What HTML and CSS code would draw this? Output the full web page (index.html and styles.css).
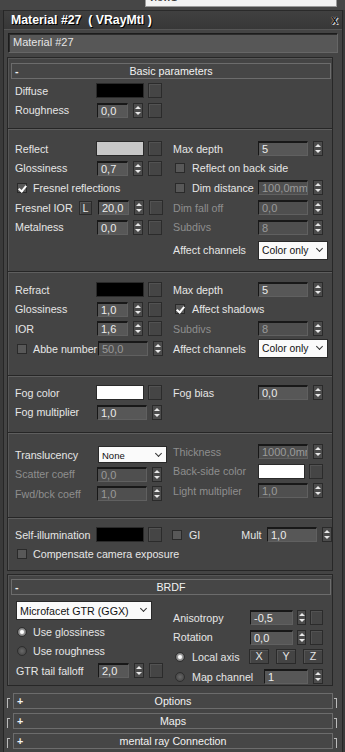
FILE: index.html
```html
<!DOCTYPE html>
<html lang="en">
<head>
    <meta charset="UTF-8">
    <title>Material #27 ( VRayMtl )</title>
    <link rel="stylesheet" href="styles.css">
</head>
<body>

    <div class="top"><div class="view"><span>view1</span></div></div>

    <div class="win">
        <div class="title"><span>Material #27&nbsp; ( VRayMtl )</span><span class="close">x</span></div>
        <div class="name">Material #27</div>

        <!-- Basic parameters -->
        <div class="panel p1">
            <div class="rh"><span class="sign">-</span><span>Basic parameters</span><span></span></div>

            <div class="sec s1">
                <div class="col">
                    <div class="row"><span class="lbl">Diffuse</span><span class="sw black"></span><span class="mb"></span></div>
                    <div class="row"><span class="lbl">Roughness</span><span class="fld">0,0</span><span class="arr"></span><span class="mb m5"></span></div>
                </div>
            </div>
            <div class="sep"></div>

            <div class="sec s2">
                <div class="col">
                    <div class="row"><span class="lbl">Reflect</span><span class="sw grey"></span><span class="mb"></span></div>
                    <div class="row"><span class="lbl">Glossiness</span><span class="fld">0,7</span><span class="arr"></span><span class="mb m5"></span></div>
                    <div class="row"><span class="chk on"></span><span class="ctext">Fresnel reflections</span></div>
                    <div class="row"><span class="lbl short">Fresnel IOR</span><span class="lbtn">L</span><span class="fld">20,0</span><span class="arr"></span><span class="mb m5"></span></div>
                    <div class="row"><span class="lbl">Metalness</span><span class="fld">0,0</span><span class="arr"></span><span class="mb m5"></span></div>
                </div>
                <div class="col">
                    <div class="row"><span class="rl">Max depth</span><span class="fld r">5</span><span class="arr"></span></div>
                    <div class="row"><span class="chk r"></span><span class="ctext r">Reflect on back side</span></div>
                    <div class="row"><span class="rl"><span class="chk r"></span><span class="ctext r">Dim distance</span></span><span class="fld r dis">100,0mm</span><span class="arr"></span></div>
                    <div class="row"><span class="rl dis">Dim fall off</span><span class="fld r dis">0,0</span><span class="arr"></span></div>
                    <div class="row"><span class="rl dis">Subdivs</span><span class="fld r dis">8</span><span class="arr"></span></div>
                    <div class="row tall"><span class="rl">Affect channels</span><span class="dd ch">Color only</span></div>
                </div>
            </div>
            <div class="sep"></div>

            <div class="sec s3">
                <div class="col">
                    <div class="row"><span class="lbl">Refract</span><span class="sw black"></span><span class="mb"></span></div>
                    <div class="row"><span class="lbl">Glossiness</span><span class="fld">1,0</span><span class="arr"></span><span class="mb m5"></span></div>
                    <div class="row"><span class="lbl">IOR</span><span class="fld">1,6</span><span class="arr"></span><span class="mb m5"></span></div>
                    <div class="row"><span class="chk"></span><span class="ctext abbe">Abbe number</span><span class="fld w dis">50,0</span><span class="arr"></span></div>
                </div>
                <div class="col">
                    <div class="row"><span class="rl">Max depth</span><span class="fld r">5</span><span class="arr"></span></div>
                    <div class="row"><span class="chk r on"></span><span class="ctext r">Affect shadows</span></div>
                    <div class="row"><span class="rl dis">Subdivs</span><span class="fld r dis">8</span><span class="arr"></span></div>
                    <div class="row"><span class="rl">Affect channels</span><span class="dd ch">Color only</span></div>
                </div>
            </div>
            <div class="sep"></div>

            <div class="sec s4">
                <div class="col">
                    <div class="row"><span class="lbl">Fog color</span><span class="sw white"></span><span class="mb"></span></div>
                    <div class="row"><span class="lbl">Fog multiplier</span><span class="fld w">1,0</span><span class="arr"></span></div>
                </div>
                <div class="col">
                    <div class="row"><span class="rl">Fog bias</span><span class="fld r">0,0</span><span class="arr"></span></div>
                </div>
            </div>
            <div class="sep"></div>

            <div class="sec s5">
                <div class="col left">
                    <div class="row"><span class="lbl">Translucency</span><span class="dd none">None</span></div>
                    <div class="row"><span class="lbl dis">Scatter coeff</span><span class="fld w dis">0,0</span><span class="arr"></span></div>
                    <div class="row"><span class="lbl dis">Fwd/bck coeff</span><span class="fld w dis">1,0</span><span class="arr"></span></div>
                </div>
                <div class="col">
                    <div class="row"><span class="rl dis">Thickness</span><span class="fld r dis">1000,0mm</span><span class="arr"></span></div>
                    <div class="row"><span class="rl dis">Back-side color</span><span class="sw white bs"></span><span class="mb"></span></div>
                    <div class="row"><span class="rl dis">Light multiplier</span><span class="fld r dis">1,0</span><span class="arr"></span></div>
                </div>
            </div>
            <div class="sep"></div>

            <div class="sec s6">
                <div class="row"><span class="lbl">Self-illumination</span><span class="sw black"></span><span class="mb"></span><span class="chk gi"></span><span class="ctext r">GI</span><span class="mult">Mult</span><span class="fld r">1,0</span><span class="arr"></span></div>
                <div class="row"><span class="chk"></span><span class="ctext">Compensate camera exposure</span></div>
            </div>
        </div>

        <!-- BRDF -->
        <div class="panel p2">
            <div class="rh"><span class="sign">-</span><span>BRDF</span><span></span></div>
            <div class="sec brdf">
                <div class="col">
                    <div class="row ddrow"><span class="dd ggx">Microfacet GTR (GGX)</span></div>
                    <div class="row"><span class="rad on"></span><span class="ctext">Use glossiness</span></div>
                    <div class="row"><span class="rad"></span><span class="ctext">Use roughness</span></div>
                    <div class="row"><span class="lbl">GTR tail falloff</span><span class="fld">2,0</span><span class="arr"></span><span class="mb m5"></span></div>
                </div>
                <div class="col right">
                    <div class="row"><span class="rl n">Anisotropy</span><span class="fld n">-0,5</span><span class="arr s"></span><span class="mb s"></span></div>
                    <div class="row"><span class="rl n">Rotation</span><span class="fld n">0,0</span><span class="arr s"></span><span class="mb s"></span></div>
                    <div class="row"><span class="rl la"><span class="rad r on"></span><span class="ctext r">Local axis</span></span><span class="xyz">X</span><span class="xyz">Y</span><span class="xyz">Z</span></div>
                    <div class="row"><span class="rl mc"><span class="rad r"></span><span class="ctext r">Map channel</span></span><span class="fld m">1</span><span class="arr"></span></div>
                </div>
            </div>
        </div>

        <div class="roll first"><span class="brk"></span><div class="rh"><span class="sign">+</span><span>Options</span><span></span></div><span class="brk rt"></span></div>
        <div class="roll"><span class="brk"></span><div class="rh"><span class="sign">+</span><span>Maps</span><span></span></div><span class="brk rt"></span></div>
        <div class="roll"><span class="brk"></span><div class="rh"><span class="sign">+</span><span>mental ray Connection</span><span></span></div><span class="brk rt"></span></div>
    </div>

</body>
</html>
```

FILE: styles.css
```css
* {
    box-sizing: border-box;
}

body {
    margin: 0;
    width: 345px;
    height: 752px;
    overflow: hidden;
    background-color: #3a3a3a;
    font-family: "Liberation Sans", Arial, sans-serif;
    font-size: 10.7px;
    color: #e6e6e6;
}

.top {
    height: 10px;
    padding-left: 145px;
    background-color: #464646;
}

.view {
    width: 192px;
    height: 7px;
    overflow: hidden;
    background-color: #f2f2f2;
    border: 1px solid #9a9a9a;
    border-top: 0;
    color: #333;
    font-size: 11px;
    padding-left: 3px;
}

.view span {
    display: block;
    margin-top: -9px;
}

.win {
    margin-left: 3px;
    width: 340px;
    height: 742px;
    background-color: #444;
    border-left: 1px solid #262626;
    border-right: 1px solid #262626;
}

.title {
    height: 20px;
    display: flex;
    align-items: center;
    justify-content: space-between;
    padding: 0 4px 0 7px;
    background: linear-gradient(#404040, #373737);
    border-top: 1px solid #2a2a2a;
    border-bottom: 1px solid #555;
    font-weight: bold;
    font-size: 12.3px;
    color: #fff;
    text-shadow: 1px 1px 0 #000;
}

.close {
    color: #1a1a1a;
    font-size: 12px;
    text-shadow: 0 0 1px #fff, 1px 1px 0 #ccc;
}

.name {
    margin: 3px 0 0 4px;
    width: 330px;
    height: 20px;
    padding: 2px 0 0 4px;
    background-color: #575757;
    border: 1px solid #1c1c1c;
    border-bottom-color: #666;
    border-right-color: #666;
    box-shadow: inset 1px 1px 0 #2c2c2c;
    font-size: 11px;
}

/* rollouts */

.panel {
    margin: 4px 0 0 3px;
    width: 326px;
    border: 1px solid #272727;
    box-shadow: inset 1px 1px 0 #565656;
}

.p1 {
    height: 514px;
}

.p2 {
    margin-top: 3px;
    height: 112px;
}

.rh {
    display: grid;
    grid-template-columns: 20px 1fr 20px;
    align-items: center;
    margin: 5px 0 0 3px;
    width: 320px;
    height: 16px;
    border: 1px solid #6c6c6c;
    background-color: #464646;
    color: #f2f2f2;
    text-align: center;
}

.p2 .rh {
    margin-top: 4px;
}

.rh .sign {
    text-align: left;
    padding-left: 3px;
    font-weight: bold;
}

.sec {
    display: grid;
    grid-template-columns: 147px 150px;
    column-gap: 11px;
    padding-left: 7px;
    align-items: start;
}

.sep {
    height: 2px;
    border-top: 1px solid #262626;
    border-bottom: 1px solid #5e5e5e;
}

.s1 { height: 49px; padding-top: 2px; }
.s2 { height: 141px; padding-top: 9px; }
.s3 { height: 102px; padding-top: 7px; }
.s4 { height: 55px; padding-top: 6px; }
.s5 { height: 83px; padding-top: 8px; }
.s5 .left { padding-top: 3px; }
.s6 { height: 50px; padding-top: 6px; display: block; }
.brdf { padding-top: 5px; padding-left: 8px; }
.brdf .right { padding-top: 8px; margin-left: -1px; }

.row {
    display: flex;
    align-items: center;
    height: 19.6px;
    white-space: nowrap;
}

.row.tall {
    height: 19px;
    margin-top: 4px;
}

.row.ddrow {
    height: 20px;
    margin-bottom: 2px;
}

.lbl {
    width: 81px;
    flex: none;
}

.lbl.short {
    width: 64px;
}

.rl {
    width: 85px;
    flex: none;
    display: flex;
    align-items: center;
}

.rl.n { width: 77px; }
.rl.la { width: 76px; }
.rl.mc { width: 91px; }

.dis {
    color: #8e8e8e;
}

/* controls */

.sw {
    width: 48px;
    height: 15px;
    border: 1px solid #2a2a2a;
    flex: none;
}

.sw.black { background-color: #000; }
.sw.grey { background-color: #c8c8c8; }
.sw.white { background-color: #fff; }
.sw.bs { width: 47px; }

.mb {
    width: 14px;
    height: 15px;
    margin-left: 4px;
    flex: none;
    background-color: #454545;
    border: 1px solid #2b2b2b;
    box-shadow: inset 1px 1px 0 #525252;
}

.mb.m5 { margin-left: 5px; }
.mb.s { width: 13px; margin-left: 4px; }

.fld {
    width: 31px;
    height: 15px;
    margin-left: 1px;
    padding: 1px 0 0 3px;
    flex: none;
    overflow: hidden;
    background-color: #575757;
    border-top: 2px solid #181818;
    border-left: 1px solid #181818;
    border-right: 1px solid #606060;
    border-bottom: 1px solid #606060;
    color: #ececec;
    font-size: 11px;
    line-height: 11px;
}

.fld.w { width: 50px; }
.fld.r { width: 50px; margin-left: 0; }
.fld.n { width: 43px; margin-left: 0; }
.fld.m { width: 44px; margin-left: 0; }

.fld.dis {
    background-color: #4f4f4f;
    color: #9a9a9a;
}

.arr {
    position: relative;
    width: 10px;
    height: 15px;
    margin-left: 5px;
    flex: none;
    background-color: #4c4c4c;
    border: 1px solid #2a2a2a;
}

.arr.s {
    width: 9px;
    margin-left: 4px;
}

.arr::before,
.arr::after {
    content: "";
    position: absolute;
    left: 50%;
    margin-left: -3px;
    border-left: 3px solid transparent;
    border-right: 3px solid transparent;
}

.arr::before {
    top: 2px;
    border-bottom: 3px solid #e8e8e8;
}

.arr::after {
    bottom: 2px;
    border-top: 3px solid #e8e8e8;
}

.lbtn {
    width: 13px;
    height: 14px;
    margin-right: 5px;
    flex: none;
    border: 1px solid #2a2a2a;
    box-shadow: inset 1px 1px 0 #555;
    text-align: center;
    line-height: 12px;
}

.chk {
    position: relative;
    width: 10px;
    height: 10px;
    margin-left: 2px;
    flex: none;
    background-color: #585858;
    border: 1px solid #2a2a2a;
}

.chk.gi {
    margin-left: 10px;
}

.chk.on::after {
    content: "";
    position: absolute;
    left: 2px;
    top: 0;
    width: 3px;
    height: 6px;
    border-right: 2px solid #fff;
    border-bottom: 2px solid #fff;
    transform: rotate(40deg);
}

.ctext {
    margin-left: 6px;
}

.ctext.r {
    margin-left: 7px;
}

.ctext.abbe {
    margin-left: 6px;
    width: 64px;
}

.rad {
    width: 10px;
    height: 10px;
    margin-left: 1px;
    flex: none;
    border-radius: 50%;
    background: radial-gradient(circle, #6a6a6a 0, #4a4a4a 70%);
    border: 1px solid #2e2e2e;
}

.rad.r {
    margin-left: 2px;
}

.rad.on {
    background: radial-gradient(circle, #fff 0, #fff 25%, #9a9a9a 45%, #666 80%);
}

.dd {
    position: relative;
    height: 19px;
    padding: 3px 0 0 3px;
    flex: none;
    background-color: #fafafa;
    border: 1px solid #2a2a2a;
    color: #111;
    font-size: 10.7px;
}

.dd::after {
    content: "";
    position: absolute;
    right: 5px;
    top: 4px;
    width: 4px;
    height: 4px;
    border-right: 1px solid #333;
    border-bottom: 1px solid #333;
    transform: rotate(45deg);
}

.dd.ch {
    width: 70px;
    font-size: 10.3px;
}

.dd.none {
    width: 69px;
    height: 17px;
    margin-left: 2px;
    padding-top: 3px;
    font-size: 9.5px;
}

.dd.ggx {
    width: 136px;
    height: 19px;
}

.mult {
    margin-left: 41px;
    width: 28px;
}

.xyz {
    width: 20px;
    height: 15px;
    margin-right: 7px;
    flex: none;
    border: 1px solid #2a2a2a;
    box-shadow: inset 1px 1px 0 #555;
    text-align: center;
    line-height: 13px;
}

.xyz:last-child {
    margin-right: 0;
}

/* collapsed rollouts */

.roll {
    display: flex;
    align-items: flex-start;
    margin: 4px 0 0 3px;
    width: 327px;
    height: 16px;
}

.roll.first {
    margin-top: 7px;
}

.roll .rh {
    margin: 0 1px 0 3px;
    flex: none;
    width: 320px;
}

.brk {
    width: 3px;
    height: 10px;
    margin-top: 5px;
    flex: none;
    border-left: 1px solid #bbb;
    border-top: 1px solid #bbb;
}

.brk.rt {
    border-left: 0;
    border-right: 1px solid #bbb;
}
```
